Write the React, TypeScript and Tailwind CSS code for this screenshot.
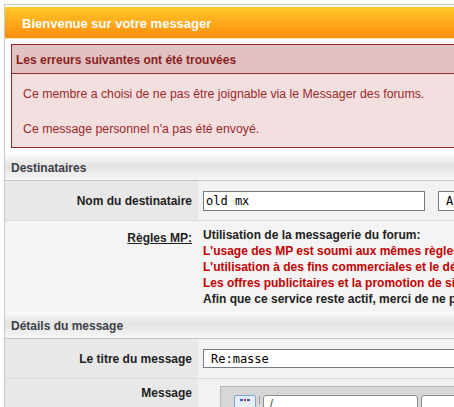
import React from 'react';

const sectionBg = 'bg-[linear-gradient(to_bottom,#fbfbfb_0%,#e4e4e4_45%,#eeeeee_75%,#f6f6f6_100%)]';

function SectionHeader({ title }: { title: string }) {
  return (
    <div className={`h-[27px] flex items-center pl-[6px] pt-px border-b border-[#c6c6c6] ${sectionBg}`}>
      <span className="text-[12px] font-bold text-[#3d4148]">{title}</span>
    </div>
  );
}

function Row({ label, children }: { label: string; children: React.ReactNode }) {
  return (
    <div className="flex h-[40px] border-b border-[#dadada] bg-[#f2f2f2]">
      <div className="w-[193px] shrink-0 bg-[#e8e8e8] flex items-center justify-end pr-[6px]">
        <span className="text-[12px] font-bold text-[#1e1e1e]">{label}</span>
      </div>
      <div className="flex-1 flex items-center pl-[5px]">{children}</div>
    </div>
  );
}

export default function App() {
  return (
    <div className="w-[454px] h-[407px] overflow-hidden bg-white font-['Liberation_Sans',Arial,sans-serif] pl-[4px] pt-[4px]">
      <div className="w-[760px] border-l border-t border-[#c6c6c6] pt-[2px]">
        {/* Header */}
        <div className="h-[32px] flex items-center pl-[17px] pt-[2px] border-b border-[#fde6ad] bg-[linear-gradient(to_bottom,#ffc82a,#ff8c0c)]">
          <span className="text-[13px] font-bold text-white">Bienvenue sur votre messager</span>
        </div>

        {/* Errors */}
        <div className="mt-[5px] ml-[6px] border border-[#8c2a2a]">
          <div className="h-[29px] flex items-center pl-[4px] pt-px bg-[#e1c1c1] border-b border-[#8c2a2a]">
            <span className="text-[12px] font-bold text-[#8a1f1f]">Les erreurs suivantes ont été trouvées</span>
          </div>
          <div className="bg-[#f3dfdf] pl-[11px] pt-[13px] pb-[11px] text-[12.3px] leading-[14px] text-[#9a2a2a]">
            <p className="whitespace-nowrap">Ce membre a choisi de ne pas être joignable via le Messager des forums.</p>
            <p className="mt-[21px] whitespace-nowrap">Ce message personnel n'a pas été envoyé.</p>
          </div>
        </div>

        <div className="mt-[6px]">
          <SectionHeader title="Destinataires" />
          <Row label="Nom du destinataire">
            <div className="w-[222px] h-[20px] border border-[#737d87] bg-white flex items-center pl-[2px] font-['DejaVu_Sans_Mono',monospace] text-[12px] text-black">
              old mx
            </div>
            <div className="ml-[13px] w-[70px] h-[20px] border border-[#737d87] bg-white flex items-center pl-[7px] font-['DejaVu_Sans_Mono',monospace] text-[12px] text-black">
              A
            </div>
          </Row>

          {/* Rules */}
          <div className="flex h-[91px] bg-[#f4f4f4]">
            <div className="w-[193px] shrink-0 flex justify-end pr-[6px] pt-[10px]">
              <span className="text-[12px] font-bold text-[#1e1e1e] underline leading-[14px]">Règles MP:</span>
            </div>
            <div className="pl-[5px] pt-[6px] text-[12px] font-bold leading-[16px] whitespace-nowrap">
              <p className="text-[#222222]">Utilisation de la messagerie du forum:</p>
              <p className="text-[#c40000]">L'usage des MP est soumi aux mêmes règles que les forums.</p>
              <p className="text-[#c40000]">L'utilisation à des fins commerciales et le démarchage sont interdits.</p>
              <p className="text-[#c40000]">Les offres publicitaires et la promotion de sites sont interdites.</p>
              <p className="text-[#222222]">Afin que ce service reste actif, merci de ne pas en abuser.</p>
            </div>
          </div>

          <SectionHeader title="Détails du message" />
          <Row label="Le titre du message">
            <div className="w-[500px] h-[19px] border border-[#737d87] bg-white flex items-center pl-[7px] font-['DejaVu_Sans_Mono',monospace] text-[12px] text-black">
              Re:masse
            </div>
          </Row>

          {/* Message */}
          <div className="flex h-[60px] bg-[#f2f2f2]">
            <div className="w-[193px] shrink-0 bg-[#e8e8e8] flex justify-end pr-[6px] pt-[7px]">
              <span className="text-[12px] font-bold text-[#1e1e1e] leading-[14px]">Message</span>
            </div>
            <div className="pl-[22px] pt-[7px]">
              <div className="w-[500px] h-[60px] border border-[#b9b9b9] bg-[#d7d7d7] flex items-start gap-[3px] pl-[13px] pt-[8px]">
                <div className="w-[22px] h-[20px] rounded-[2px] border border-[#7aa4d8] bg-[#e6eefa] flex items-start justify-center pt-[2px]">
                  <svg width="14" height="8" viewBox="0 0 14 8">
                    <rect x="2" y="1" width="3" height="2" fill="#3a5fc2" />
                    <rect x="6" y="1" width="2" height="2" fill="#c83030" />
                    <rect x="9" y="1" width="3" height="2" fill="#3a5fc2" />
                  </svg>
                </div>
                <div className="w-px h-[8px] bg-[#9a9a9a] mt-[1px]" />
                <div className="w-[155px] h-[20px] rounded-[3px] border border-[#8e8e8e] bg-white pl-[6px] text-[11px] leading-[14px] text-[#333]">
                  /
                </div>
                <div className="w-[80px] h-[20px] rounded-[3px] border border-[#8e8e8e] bg-white" />
              </div>
            </div>
          </div>
        </div>
      </div>
    </div>
  );
}
